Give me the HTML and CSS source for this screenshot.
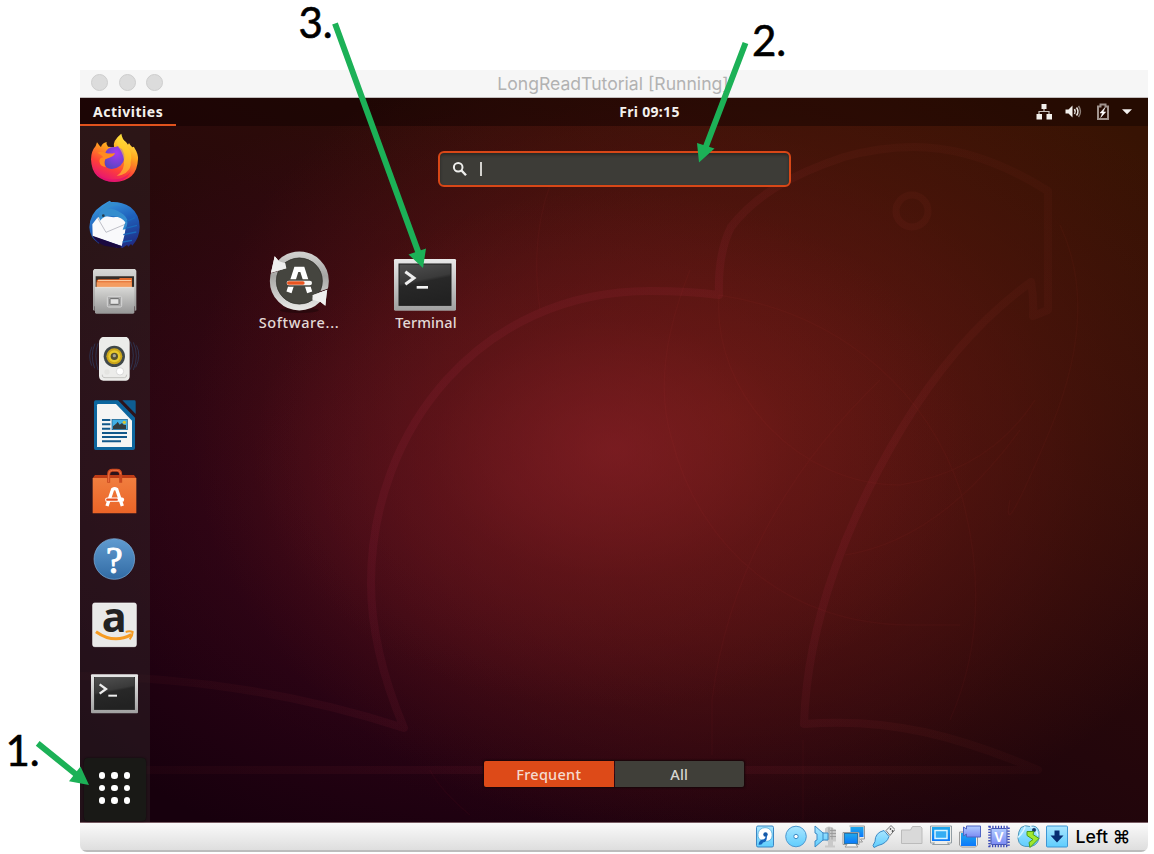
FILE: index.html
```html
<!DOCTYPE html>
<html lang="en">
<head>
<meta charset="utf-8">
<title>LongReadTutorial [Running]</title>
<link rel="stylesheet" href="styles.css">
</head>
<body>
<div class="page">
<main class="window">
  <header class="titlebar">
    <div class="lights"><i></i><i></i><i></i></div>
    <span class="window-title">LongReadTutorial [Running]</span>
  </header>

  <section class="desktop">
    <svg class="wallpaper" viewBox="80 98 1068 723" fill="none" stroke-linejoin="round">
      <defs><radialGradient id="outline" gradientUnits="userSpaceOnUse" cx="600" cy="480" r="560"><stop offset="0" stop-color="#ff4a60" stop-opacity=".08"/><stop offset=".45" stop-color="#ff3a70" stop-opacity=".065"/><stop offset=".75" stop-color="#ff5a50" stop-opacity=".042"/><stop offset="1" stop-color="#ff5050" stop-opacity=".028"/></radialGradient></defs>
      <g stroke-width="8" stroke="url(#outline)">
        <path d="M80 676Q250 678 404 728C388 690 371 640 371 583C371 430 480 291 650 291Q690 291 719 295C718 265 722 245 731 227C755 196 790 175 844 157Q880 147 914 147C960 147 1005 164 1048 191V310L1033 316Q1034 298 1031 282C985 315 940 365 902 428C850 515 807 620 804 724C890 717 960 737 1038 770H80"/>
        <circle cx="912" cy="211" r="16" stroke-width="7"/>
      </g>
      <g stroke-width="1.5" stroke="#ff5a50" stroke-opacity=".035">
        <path d="M550 185Q530 240 540 310M719 295C712 395 800 485 900 485Q990 470 1035 400M719 295C850 315 930 400 960 490C980 560 985 640 950 720M690 270Q650 370 672 440C700 550 790 625 910 625H960M1020 430Q940 540 845 555M1060 225Q1100 310 1050 430T1010 500M880 380Q735 520 712 700V755M803 740V820M430 770Q440 790 470 815"/>
      </g>
    </svg>

    <div class="topbar">
      <span class="activities">Activities</span>
      <span class="clock">Fri 09:15</span>
      <div class="tray">
        <svg width="100" height="24" viewBox="1036 100 100 24">
          <path d="M1041.500 104h5v5h-5zM1036.500 114h5.500v5.500h-5.500zM1046.500 114h5.500v5.500h-5.500z" fill="#f2efeb"/>
          <path d="M1044 109v3M1039 114v-2.500h10V114" stroke="#c9c2bd" stroke-width="1.200" fill="none"/>
          <path d="M1065.500 109.500h3l4-4v12l-4-4h-3z" fill="#f2efeb"/>
          <path d="M1074.500 109q1.500 2.500 0 5M1076.500 107.500q3 4 0 8" stroke="#e9e4e0" stroke-width="1.600" fill="none"/>
          <path d="M1078.500 106q4 5.500 0 11" stroke="#8b7d76" stroke-width="1.500" fill="none"/>
          <path d="M1098 106.500h2.500v-2h5v2h2.500v12.500h-10z" fill="none" stroke="#a1948e" stroke-width="2"/>
          <path d="M1105 107.500l-5 5.500h2.500l-1.800 4.500 5-5.600h-2.500z" fill="#fff" stroke="#fff" stroke-width=".5"/>
          <path d="M1122 109.200h10l-5 5z" fill="#f4f1ee"/>
        </svg>
      </div>
    </div>

    <div class="workspace">
      <nav class="dock">
        <svg viewBox="36 39 156 156">
          <defs>
            <linearGradient id="fox" x1=".75" y1="0" x2=".3" y2="1"><stop offset="0" stop-color="#fff44f"/><stop offset=".38" stop-color="#ffa21e"/><stop offset=".7" stop-color="#ff4038"/><stop offset="1" stop-color="#e3107a"/></linearGradient>
            <radialGradient id="orb" cx=".6" cy=".3" r=".75"><stop offset="0" stop-color="#a639f2"/><stop offset="1" stop-color="#5646bf"/></radialGradient>
          </defs>
          <path d="M45 118q0-24 14-40l4-11 9 12 3 2q3-12 17-15-3 8 4 14l18 2q-5-20 22-41 2 16 14 25l6 8 3-5q4 8 10 13l5-2 1 3q12 18 11 35-3 66-71 68-68-2-70-68z" fill="url(#fox)"/>
          <path d="M85 115q0-26 20-33l13-1 9-3q2 6 11 9 17 29-5 50-24 18-43 4-6-9-5-26z" fill="url(#orb)"/>
          <path d="M64 98q12-6 24 0 12 5 29 1-2 9-17 14l-12 5q-6 14 2 24-18-2-20-18 1-12 12-12-7-9-18-14z" fill="#ff8b20"/>
          <path d="M125 79q-6-20 10-36 1 21 18 37 18 16 11 47 3 17-15 32-12 8-27 9 25-16 22-48-4-25-19-41z" fill="#ffd42b" fill-opacity=".6"/>
          <path d="M55 148q21 35 62 30 31-1 48-24-15 32-50 32-42 0-60-38z" fill="#e0126f" fill-opacity=".7"/>
        </svg>

        <svg viewBox="36 239 156 156">
          <defs><linearGradient id="bird" x1=".3" y1="0" x2=".7" y2="1"><stop offset="0" stop-color="#3b9be0"/><stop offset=".45" stop-color="#1f62bd"/><stop offset="1" stop-color="#202b83"/></linearGradient></defs>
          <path d="M40 321q2-43 38-66l16-10 7-4 4 4q31-2 58 15 28 22 28 60 0 32-22 56l-4-5-8 8-4-5-14 9-8-4-12 5 2-8-50-12-2 6q-28-17-29-49z" fill="url(#bird)"/>
          <path d="M64 292L80 286 112 291 141 288 151 309 146 342 137 377Q94 363 50 348L49 312z" fill="#f9f9fb"/>
          <path d="M65 293l25 43 57-24" fill="none" stroke="#bfc0c8" stroke-width="3"/>
          <path d="M67 290q4-24 35-47l5 4q18 3 30 9-26-5-42 10 17-4 32 7 19 9 27 25 1 18-6 29l-8 1 8-22q-10-15-34-18-26-6-42 13l-3-10z" fill="#348dce"/>
          <circle cx="82" cy="286" r="4" fill="#243b4b"/>
          <path d="M152 303l25-11M148 324l35-9M142 343l39-8M140 365l28-5" stroke="#1a69bb" stroke-width="4"/>
          <path d="M49 346q38 13 87 31l-5 7-46-8q-24-10-36-30z" fill="#1a0940"/>
        </svg>

        <svg viewBox="36 439 156 156">
          <defs><linearGradient id="metal" x1="0" y1="0" x2="0" y2="1"><stop offset="0" stop-color="#d8d8d6"/><stop offset="1" stop-color="#969696"/></linearGradient></defs>
          <path d="M55 448h122l4 5v119l-5 2V560H56v14l-5-3V453z" fill="url(#metal)"/>
          <path d="M59 470h115v36H59z" fill="#352d28"/>
          <path d="M62 505v-23l6-3h60l4-4h36v30z" fill="#e26a2c"/>
          <path d="M62 488h105v17H62z" fill="#f49b5f"/><path d="M66 483h100" stroke="#ffdcb6" stroke-width="3"/>
          <path d="M57 503h118v75q0 4-4 4H61q-4 0-4-4z" fill="url(#metal)"/>
          <path d="M57 503h118" stroke="#efefed" stroke-width="2"/>
          <rect x="94" y="530" width="43" height="32" rx="4" fill="#aaa" stroke="#d7d7d7" stroke-width="3"/>
          <rect x="102" y="537" width="27" height="17" rx="2" fill="#e3e3e3" stroke="#666" stroke-width="3"/>
        </svg>

        <svg viewBox="36 39 156 156">
          <g fill="none" stroke="#304d7d" stroke-opacity=".5" stroke-width="3"><path d="M57 71q-16 35-1 74M48 80q-13 28-1 57M66 70q-13 35 0 80M172 67q18 40 0 83M181 76q16 30-2 66M163 65q18 40 0 84"/></g>
          <path d="M80 51h72q9 5 9 18v99q0 13-11 14H82q-12 0-13-14V69q0-14 11-18z" fill="#ececea"/>
          <path d="M79 164v4q1 5 8 5h58q7 0 7-9" fill="none" stroke="#c4c4c1" stroke-width="3"/>
          <circle cx="115" cy="109" r="32" fill="#40484a"/><circle cx="115" cy="109" r="24" fill="#caa51b"/><circle cx="115" cy="109" r="18" fill="#e8c92c"/><circle cx="115" cy="109" r="11" fill="#555130"/><circle cx="115" cy="107" r="5" fill="#a7a597"/>
          <circle cx="132" cy="154" r="11" fill="#fff" stroke="#ccc" stroke-width="2"/><circle cx="93" cy="156" r="8" fill="#e4e4e1"/>
        </svg>

        <svg viewBox="36 239 156 156">
          <path d="M59 240h67l51 52v91q0 6-6 6H59q-5 0-5-6V246q0-6 5-6z" fill="#0d669e"/>
          <path d="M139 240h36q4 0 4 4v37z" fill="#0e5d92"/>
          <path d="M67 251h53l48 50v79H63V255q0-4 4-4z" fill="#f5f5f4"/>
          <path d="M78 299h25M78 312h25M78 325h25M78 338h75M78 350h75M78 363h57" stroke="#12588a" stroke-width="6"/>
          <rect x="108" y="297" width="46" height="31" fill="#42b1e5" stroke="#175a88" stroke-width="2"/>
          <path d="M111 326v-8l11-9 3-5 6 9 7-5 5 5 7 1v12z" fill="#343d3e"/><circle cx="145" cy="306" r="5" fill="#d7c633"/>
        </svg>

        <svg viewBox="36 439 156 156">
          <defs><linearGradient id="bag" x1="0" y1="0" x2="0" y2="1"><stop offset="0" stop-color="#f07e3f"/><stop offset="1" stop-color="#eb6427"/></linearGradient></defs>
          <path d="M57 466h117l7 10H50z" fill="#bd3c16"/>
          <path d="M50 475h131v106H50z" fill="url(#bag)"/>
          <path d="M98 489v-25q0-12 11-12h14q11 0 11 12v25" fill="none" stroke="#c8481f" stroke-width="9"/>
          <path d="M98 487v-23q0-12 11-12h14q11 0 11 12" fill="none" stroke="#ef7141" stroke-width="3"/>
          <path d="M93 559l17-50q6-4 12 0l17 50" fill="none" stroke="#fff" stroke-width="10"/>
          <path d="M94 540h44" stroke="#fff" stroke-width="13" stroke-linecap="round"/><path d="M94 540h28" stroke="#e54e1c" stroke-width="7" stroke-linecap="round"/>
        </svg>

        <svg viewBox="36 40 156 156">
          <defs><linearGradient id="help" x1="0" y1="0" x2="0" y2="1"><stop offset="0" stop-color="#609bd0"/><stop offset="1" stop-color="#326ba4"/></linearGradient></defs>
          <circle cx="115" cy="118" r="61" fill="url(#help)" stroke="#80b1dc" stroke-width="2"/>
          <text x="115" y="160" class="help-mark">?</text>
        </svg>

        <svg viewBox="36 240 156 156">
          <rect x="50" y="249" width="131" height="131" rx="6" fill="#e9e9e8" stroke="#fafafa" stroke-width="2"/>
          <text x="115" y="336" class="amazon-mark">a</text>
          <path d="M60 335q53 38 106 9" fill="none" stroke="#f69b22" stroke-width="9"/>
          <path d="M149 336q12-4 21 0 0 12-9 22" fill="none" stroke="#f69b22" stroke-width="6"/>
        </svg>

        <svg viewBox="36 440 156 156">
          <defs>
            <linearGradient id="screen" x1="0" y1="0" x2=".25" y2="1"><stop offset="0" stop-color="#505050"/><stop offset=".45" stop-color="#3a3a3a"/><stop offset=".52" stop-color="#282828"/><stop offset="1" stop-color="#222"/></linearGradient>
            <linearGradient id="frame" x1="0" y1="0" x2="0" y2="1"><stop offset="0" stop-color="#e8e8e8"/><stop offset="1" stop-color="#a0a0a0"/></linearGradient>
          </defs>
          <rect x="45" y="462" width="141" height="117" rx="3" fill="url(#frame)"/>
          <rect x="55" y="472" width="121" height="96" fill="url(#screen)" stroke="#202020" stroke-width="2"/>
          <path d="M71 492l19 14-19 14" fill="none" stroke="#ededed" stroke-width="7"/><path d="M97 526h26" stroke="#eee" stroke-width="6"/>
        </svg>

        <button class="show-apps" aria-label="Show Applications">
          <i></i><i></i><i></i><i></i><i></i><i></i><i></i><i></i><i></i>
        </button>
      </nav>

      <div class="overview">
        <div class="search">
          <svg width="16" height="16" viewBox="0 0 16 16"><circle cx="6.200" cy="6.200" r="4.300" fill="none" stroke="#eeeeec" stroke-width="2"/><path d="M9.500 9.500l4.500 4.800" stroke="#eeeeec" stroke-width="2.400"/></svg>
          <i class="caret"></i>
        </div>

        <div class="apps">
          <div class="app">
            <svg viewBox="48 24 198 198">
              <defs><linearGradient id="ring" x1="0" y1="0" x2="0" y2="1"><stop offset="0" stop-color="#cfcfcd"/><stop offset=".4" stop-color="#a5a5a3"/><stop offset="1" stop-color="#e4e4e2"/></linearGradient></defs>
              <ellipse cx="148" cy="211" rx="58" ry="8" fill="#1a0508" opacity=".5"/>
              <circle cx="148" cy="123" r="79" fill="#45453f" stroke="url(#ring)" stroke-width="19"/>
              <circle cx="148" cy="123" r="69" fill="none" stroke="#33332f" stroke-width="2"/>
              <path d="M57 100l30-9M238 146l-29 10" stroke="#391015" stroke-width="3"/>
              <path d="M74 49l13 15 22 21-46 13zM231 150l-5 47-14-11-25-20z" fill="#efefee"/>
              <path d="M74 49l13 15 19 6 3 15-46 13zM231 150l-5 47-14-11-25-7 1-13z" fill="#efefee"/>
              <path d="M117 157l22-69h18l22 69" fill="none" stroke="#fff" stroke-width="16"/>
              <path d="M117 129h62" stroke="#45453f" stroke-width="22" stroke-linecap="round"/>
              <path d="M117 129h62" stroke="#f5f5f4" stroke-width="14" stroke-linecap="round"/><path d="M116 129h43" stroke="#e95420" stroke-width="10" stroke-linecap="round"/>
            </svg>
            <span class="app-software">Software...</span>
          </div>
          <div class="app">
            <svg viewBox="426 24 198 198">
              <rect x="432" y="57" width="186" height="155" rx="4" fill="url(#frame)"/>
              <rect x="447" y="72" width="156" height="124" fill="url(#screen)" stroke="#202020" stroke-width="3"/>
              <path d="M466 95l26 19-26 19" fill="none" stroke="#eee" stroke-width="9"/><path d="M500 142h34" stroke="#f3f3f3" stroke-width="8"/>
            </svg>
            <span class="app-terminal">Terminal</span>
          </div>
        </div>

        <div class="toggle"><span class="active">Frequent</span><span>All</span></div>
      </div>
    </div>
  </section>

  <footer class="statusbar">
    <svg class="disk" viewBox="0 0 24 24"><defs><linearGradient id="sky" x1="0" y1="0" x2="0" y2="1"><stop offset="0" stop-color="#a9e5ff"/><stop offset="1" stop-color="#5fcdfd"/></linearGradient><linearGradient id="blue" x1="0" y1="0" x2="0" y2="1"><stop offset="0" stop-color="#20a9eb"/><stop offset="1" stop-color="#0b78fb"/></linearGradient><linearGradient id="lilac" x1="0" y1="0" x2="0" y2="1"><stop offset="0" stop-color="#b0ccff"/><stop offset="1" stop-color="#7c8bf3"/></linearGradient></defs>
      <rect x="3.500" y="1.500" width="17" height="21" rx="1.500" fill="url(#sky)" stroke="#3b87c5"/><path d="M12 3.200c-9 0-9 13.500-2 12.500 6 3 10-1 9-7-1-4-4-5.500-7-5.500z" fill="#fff" stroke="#53a8d8" stroke-width=".8"/><circle cx="12.500" cy="10" r="2.200" fill="#1459a8"/><path d="M14 11q0 7-4 7-1 3-4.500 2 1-5 4.500-5 2 0 3-4z" fill="#1663bb"/></svg>
    <svg viewBox="0 0 24 24"><circle cx="12" cy="12" r="10.300" fill="url(#sky)" stroke="#4b97cf"/><circle cx="12" cy="12" r="2.200" fill="#fff" stroke="#3b8ac5"/></svg>
    <svg viewBox="0 0 24 24"><path d="M12 4q4-4 8 0l3 1v12h-3v4h2v2H12v-2h3v-4l-3-1z" fill="#c9c9c9"/><path d="M16 3v12M19 3v12M17 6h6M17 9h6M17 12h6" stroke="#989898" stroke-width=".9"/><path d="M2 1.500l8 7h5v7h-5l-8 7v-6l2-1v-6l-2-1z" fill="url(#sky)" stroke="#3b8ac5"/><path d="M10 8v8" stroke="#3b8ac5"/></svg>
    <svg viewBox="0 0 24 24"><path d="M7.500 1.500h15v13h-4l2 3h-8" fill="#e8e8e4" stroke="#999"/><rect x="8.500" y="2.500" width="13" height="10" fill="url(#blue)"/><path d="M1 8h16v12h-3l2 2.500H3L5 20H1z" fill="#f4f4f1" stroke="#999"/><rect x="2.500" y="9" width="13" height="10" fill="url(#blue)" stroke="#2875ac"/></svg>
    <svg viewBox="0 0 24 24"><path d="M15 6l5-5 4 4-5 6z" fill="#eee" stroke="#777"/><path d="M19 4l1 1M21 6l1 1" stroke="#333" stroke-width="1.500"/><path d="M13 6l5 6q-2 7-11 9l-4 2-1-2 2-4q0-9 9-11z" fill="url(#sky)" stroke="#3b8ac5"/></svg>
    <svg viewBox="0 0 24 24"><path d="M1.500 5.500h9l2-3.500h8l1.500 1.500V19H1.500z" fill="#d9d9d9" stroke="#bbb"/></svg>
    <svg viewBox="0 0 24 24"><path d="M1.500 1.500h21v17h-4l2 1.500h-17l2-1.500h-4z" fill="#edede9" stroke="#929da4"/><rect x="3" y="2.500" width="18" height="14" fill="url(#blue)"/><rect x="6" y="6" width="12" height="8" fill="#35adf3" stroke="#d8f4ff" stroke-width="1.500"/></svg>
    <svg viewBox="0 0 24 24"><path d="M1.500 7.500h18v13l-2 2h-14l-2-2z" fill="#eee" stroke="#999"/><rect x="3" y="8.500" width="15" height="13" fill="url(#blue)"/><path d="M5.500 2.500l3 2v-3h14v11h-14v-3l-3 2z" fill="url(#lilac)" stroke="#5165c4"/></svg>
    <svg viewBox="0 0 24 24"><rect x="2.500" y="2.500" width="19" height="19" fill="none" stroke="#3747b7" stroke-width="2.500" stroke-dasharray="1.300 1.500"/><rect x="4" y="4" width="16" height="16" rx="1" fill="url(#lilac)" stroke="#4658b6"/><text x="12" y="17" class="chip-mark">V</text></svg>
    <svg viewBox="0 0 24 24"><path d="M5 3q4-3 9-1 7-2 9 5v7q-2 8-10 8-10 1-11-8 0-7 3-11z" fill="url(#sky)" stroke="#5096ba"/><path d="M9 2q-1 5-7 11M14 2q6 2 8 9" stroke="#d8f4ff" stroke-width="1.500" fill="none"/><circle cx="18" cy="5.500" r="2" fill="#163667"/><path d="M11 7h7l-1 3 6 4-9 9-1-5 4-3-6-4z" fill="#a0e72f" stroke="#4b9c18"/></svg>
    <svg viewBox="0 0 24 24"><rect x="1.500" y="1.500" width="21" height="21" rx="1" fill="url(#sky)" stroke="#3d96d4"/><path d="M9.500 6h5v5h4L12 18l-6.500-7h4z" fill="#082d72"/></svg>
    <span class="hostkey">Left <b>⌘</b></span>
  </footer>
</main>

<svg class="annotations" viewBox="0 0 1154 854">
  <g stroke="#1cb157" stroke-width="6"><path d="M37.700 743.300L78 776M335 23.500L419 254M745.500 43L705 149"/></g>
  <path d="M89 785L69 781.300 80.500 766.500zM423 268L408.500 254.500 426 248.500zM699 162.500L697 143 714.500 148.500z" fill="#1cb157"/>
  <text x="5.500" y="765.500">1.</text><text x="298.500" y="37.500">3.</text><text x="752" y="55.500">2.</text>
</svg>
</div>
</body>
</html>
```
FILE: styles.css
```css
* { box-sizing: border-box; }
body { margin: 0; background: #fff; }
.page { position: relative; width: 1154px; height: 854px; padding: 70px 6px 2px 80px; overflow: hidden; }
.window { width: 1068px; height: 782px; display: flex; flex-direction: column; border-radius: 0 0 7px 7px; overflow: hidden; }

.titlebar { height: 28px; flex: none; background: #f6f6f6; border-bottom: 1px solid #c2bdbd; display: grid; grid-template-columns: 1fr auto 1fr; align-items: center; }
.lights { display: flex; gap: 10.5px; padding: 0 0 2px 11px; }
.lights i { width: 17px; height: 17px; border-radius: 50%; background: #dcdcdc; border: 1px solid #cecece; }
.window-title { font: 17.6px/27px Inter, sans-serif; color: #b2b2b2; white-space: nowrap; transform: translateX(-1px); }

.desktop { position: relative; height: 724px; flex: none; display: flex; flex-direction: column;
  background:
    radial-gradient(ellipse 360px 260px at 535px 352px, rgba(140,32,42,.58), rgba(125,26,36,.24) 50%, transparent),
    radial-gradient(ellipse 540px 430px at 650px 320px, rgba(112,30,14,.74), rgba(100,26,14,.5) 50%, transparent),
    radial-gradient(ellipse 560px 400px at 440px 390px, rgba(95,12,42,.68), rgba(85,8,38,.34) 52%, transparent),
    linear-gradient(205deg, #371303 5%, #29090a 42%, #17000d 85%); }
.wallpaper { position: absolute; inset: 0; width: 1068px; height: 723px; }

.topbar { position: relative; height: 28px; flex: none; background: rgba(12,0,0,.42); display: grid; grid-template-columns: 1fr auto 1fr; align-items: center; color: #f4f1ee; font: bold 14px/20px "Noto Sans", sans-serif; }
.activities { width: 96px; height: 28px; padding: 4px 0 0 13px; border-bottom: 2px solid #e0521d; letter-spacing: .52px; }
.clock { transform: translateX(35.5px); letter-spacing: .3px; }
.tray { justify-self: end; padding-right: 12px; display: flex; }

.workspace { position: relative; flex: 1; display: flex; }
.dock { width: 70px; padding: 7px 0 0 8px; background: rgba(50,40,42,.42); display: flex; flex-direction: column; gap: 14.7px; }
.dock svg { width: 52px; height: 52px; flex: none; overflow: visible; }
.help-mark { font: 112px "Liberation Serif", serif; fill: #fff; stroke: #fff; stroke-width: 3px; text-anchor: middle; }
.amazon-mark { font: bold 124px "Open Sans", sans-serif; fill: #222; text-anchor: middle; }
.show-apps { width: 62px; height: 63px; margin: 24.5px 0 0 -4.500px; padding: 14.500px 15px; border: 0; border-radius: 4px; background: #191916; box-shadow: 0 0 2px #0b0b0a; display: grid; grid-template-columns: repeat(3, 6.500px); grid-auto-rows: 6.500px; gap: 6px; }
.show-apps i { border-radius: 50%; background: #fff; }

.overview { flex: 1; position: relative; padding: 25px 0 0 0; display: flex; flex-direction: column; align-items: flex-start; }
.search { width: 353px; height: 36px; margin-left: 287.5px; border: 2px solid #d84717; border-radius: 6px; background: #3d3c37; box-shadow: inset 0 2px 3px #292925; display: flex; align-items: center; padding-left: 12px; gap: 12px; }
.caret { width: 2px; height: 14px; background: #d4d3cf; }
.apps { display: flex; gap: 26px; margin: 61px 0 0 99px; }
.app { width: 100px; display: flex; flex-direction: column; align-items: center; color: #e3d9d7; font: 500 14.5px/20px "Noto Sans", sans-serif; }
.app svg { width: 66px; height: 66px; }
.app span { margin-top: -2.5px; white-space: nowrap; }
.app-software { letter-spacing: .65px; }
.app-terminal { transform: translateX(1px); letter-spacing: .1px; }
.toggle { display: flex; gap: 1px; width: 260px; height: 26px; margin: auto 0 35px 334px; box-shadow: 0 0 2px 1px #170609; border-radius: 2px; overflow: hidden; }
.toggle span { flex: 1; background: #403f39; color: #d8d7d2; text-align: center; font: 500 14.5px/26px "Noto Sans", sans-serif; letter-spacing: .25px; }
.toggle .active { background: #dd4a18; color: #f5dcd0; }

.statusbar { height: 30px; flex: none; display: flex; align-items: center; gap: 5.100px; padding: 0 0 2px 673px; background: linear-gradient(#fafafa, #dedede); border-top: 1px solid #7a5f66; border-bottom: 2px solid #bcbcbc; }
.statusbar svg { width: 24px; height: 24px; flex: none; transform: translateY(.5px); }
.statusbar .disk { margin-right: 1.500px; }
.chip-mark { font: bold 14px "Liberation Sans", sans-serif; fill: #fff; text-anchor: middle; }
.hostkey { font: 500 17.7px/24px Inter, sans-serif; color: #000; white-space: nowrap; transform: translate(1px, 1px); }
.hostkey b { font-weight: 500; }

.annotations { position: absolute; left: 0; top: 0; width: 1154px; height: 854px; overflow: visible; }
.annotations text { font: 42px Lato, sans-serif; fill: #000; stroke: #000; stroke-width: .6px; }
```
